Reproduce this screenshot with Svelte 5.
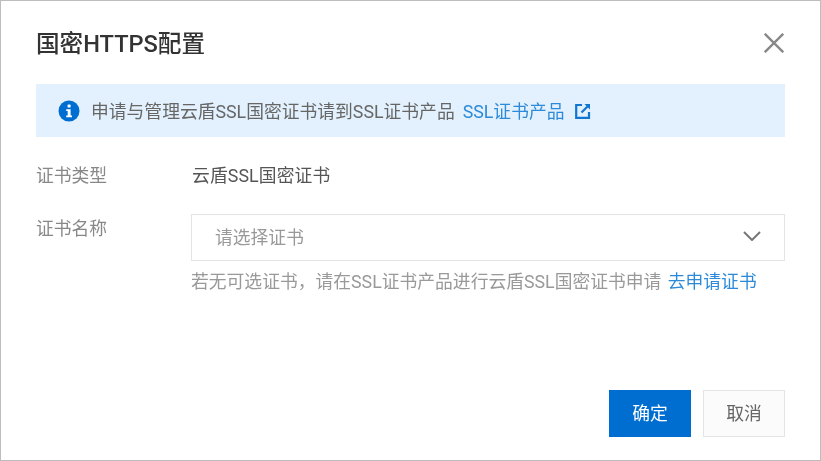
<script>
  const typeLabel = '证书类型';
  const nameLabel = '证书名称';
</script>

<div class="dialog">
  <header class="head">
    <h2>国密HTTPS配置</h2>
    <button class="close" aria-label="关闭">
      <svg width="20" height="20" viewBox="0 0 20 20"><path d="M0.8 0.8 L19.2 19.2 M19.2 0.8 L0.8 19.2" /></svg>
    </button>
  </header>

  <div class="alert">
    <svg class="info" width="22" height="22" viewBox="0 0 22 22">
      <circle cx="11" cy="11" r="10.5" />
      <rect x="9.6" y="4.6" width="3" height="3" rx="0.6" />
      <path d="M8.2 9.2 H12.6 V15.4 H14 V17.2 H8.2 V15.4 H9.7 V11 H8.2 Z" />
    </svg>
    <span class="msg">申请与管理云盾SSL国密证书请到SSL证书产品</span>
    <a class="link">SSL证书产品</a>
    <svg class="ext" width="16" height="16" viewBox="0 0 16 16">
      <path d="M7 2 H1.2 V14.8 H14 V9" />
      <path d="M6.5 9.5 L13.5 2.5" />
      <path class="tip" d="M9.5 1 H15 V6.5 Z" />
    </svg>
  </div>

  <div class="form">
    <div class="row first">
      <span class="label">{typeLabel}</span>
      <span class="value">云盾SSL国密证书</span>
    </div>
    <div class="row">
      <span class="label">{nameLabel}</span>
      <div class="field">
        <div class="select">
          <span>请选择证书</span>
          <svg width="18" height="10" viewBox="0 0 18 10"><path d="M1 1 L9 9 L17 1" /></svg>
        </div>
        <p class="hint">若无可选证书，请在SSL证书产品进行云盾SSL国密证书申请 <a class="link">去申请证书</a></p>
      </div>
    </div>
  </div>

  <footer class="foot">
    <button class="btn primary">确定</button>
    <button class="btn">取消</button>
  </footer>
</div>

<style>
  :global(body) { margin: 0; background: #fff; }

  .dialog {
    box-sizing: border-box;
    width: 821px;
    height: 461px;
    display: flex;
    flex-direction: column;
    padding: 0 35px 23px 35px;
    border: 1px solid #bdbdbd;
    background: #fff;
    color: #444;
    font-family: Roboto, "Noto Sans CJK SC", sans-serif;
    font-size: 17.8px;
    filter: blur(0.55px);
  }

  .head {
    display: flex;
    align-items: center;
    justify-content: space-between;
    height: 83px;
    flex: none;
  }
  .head h2 {
    margin: 0 0 2px;
    font-size: 23.6px;
    font-weight: 500;
    color: #333;
  }
  .close {
    display: flex;
    margin-right: 1px;
    padding: 0;
    border: 0;
    background: none;
  }
  .close path { fill: none; stroke: #888; stroke-width: 2.4; }

  .alert {
    display: flex;
    align-items: center;
    height: 53px;
    flex: none;
    padding-left: 22px;
    background: #e2f1fd;
  }
  .info { flex: none; margin-right: 11px; }
  .info circle { fill: #006dd0; }
  .info rect, .info path { fill: #fff; }
  .msg { color: #666; padding-bottom: 2px; }
  .alert .link { margin-left: 8px; padding-bottom: 2px; }
  .ext { margin-left: 10px; }
  .ext path { fill: none; stroke: #0f76d2; stroke-width: 2.2; }
  .ext .tip { fill: #0f76d2; stroke: none; }

  .link { color: #2d8ad8; }

  .form { display: flex; flex-direction: column; flex: 1; }
  .row { display: flex; align-items: flex-start; }
  .row.first { align-items: center; margin-top: 24px; margin-bottom: 27px; }
  .label { width: 155px; flex: none; color: #888; }
  .value { color: #555; margin-left: 1px; letter-spacing: 0.1px; }
  .field { flex: 1; }

  .select {
    box-sizing: border-box;
    display: flex;
    align-items: center;
    justify-content: space-between;
    height: 47px;
    padding: 0 23px 3px;
    border: 1px solid #e4e4e4;
    color: #999;
  }
  .select path { fill: none; stroke: #777; stroke-width: 2; }

  .hint { margin: 6px 0 0; color: #999; }
  .hint .link { margin-left: 2px; }

  .foot { display: flex; justify-content: flex-end; gap: 12px; flex: none; }
  .btn {
    box-sizing: border-box;
    width: 82px;
    height: 47px;
    padding: 0 0 3px;
    border: 1px solid #e4e4e4;
    background: #fbfbfb;
    color: #666;
    font: inherit;
  }
  .primary {
    border-color: #006dd0;
    background: #006dd0;
    color: #fff;
  }
</style>
